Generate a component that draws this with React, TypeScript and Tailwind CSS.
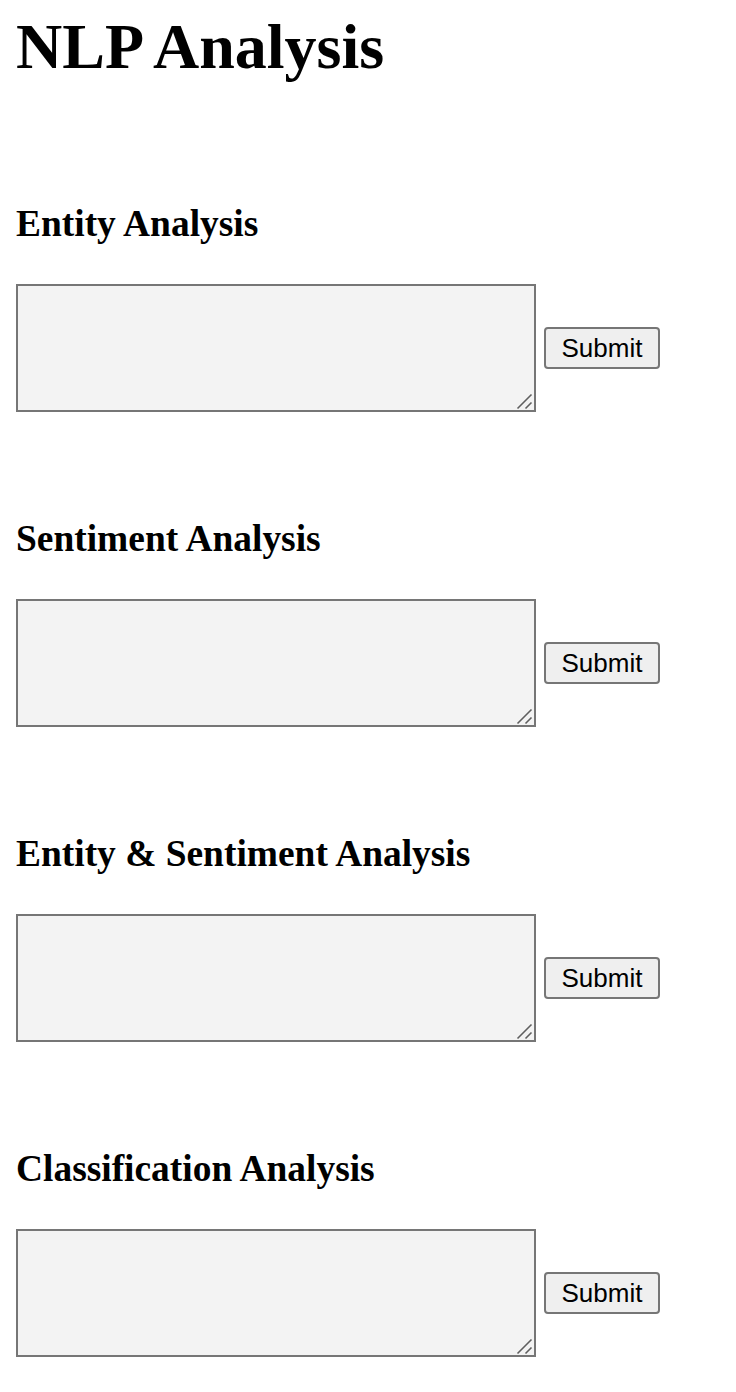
import React, { useState } from "react";

// Sections of the analysis form, in page order.
const sections = [
  { id: "entity", title: "Entity Analysis" },
  { id: "sentiment", title: "Sentiment Analysis" },
  { id: "entity-sentiment", title: "Entity & Sentiment Analysis" },
  { id: "classification", title: "Classification Analysis" },
];

function ResizeGrip() {
  return (
    <svg
      className="pointer-events-none absolute right-[2px] bottom-[2px]"
      width="18"
      height="18"
      viewBox="0 0 18 18"
    >
      <line x1="1.5" y1="16.5" x2="15.5" y2="2.5" stroke="#5f5f5f" strokeWidth="1.6" />
      <line x1="9.5" y1="16.5" x2="15.5" y2="10.5" stroke="#5f5f5f" strokeWidth="1.6" />
    </svg>
  );
}

function AnalysisSection({ title, first }: { title: string; first: boolean }) {
  const [text, setText] = useState("");

  return (
    <section className={first ? "mt-[118px]" : "mt-[105px]"}>
      <h3 className="text-[37.44px] leading-[43px] font-bold text-black">{title}</h3>
      <div className="mt-[39px] flex items-center gap-2">
        <div className="relative">
          <textarea
            value={text}
            onChange={(e) => setText(e.target.value)}
            className="block w-[520px] h-[128px] resize-none border-2 border-[#767676] bg-[#f3f3f3] outline-none"
          />
          <ResizeGrip />
        </div>
        <button
          type="button"
          className="w-[116px] h-[42px] rounded-[4px] border-2 border-[#767676] bg-[#efefef] text-[26px] leading-none text-black font-['Liberation_Sans',Arial,sans-serif]"
          onClick={() => console.log(title, text)}
        >
          Submit
        </button>
      </div>
    </section>
  );
}

export default function App() {
  return (
    <div className="min-h-screen bg-white px-4 pt-[10px] pb-10 font-['Liberation_Serif','Times_New_Roman',serif] text-black">
      <h1 className="text-[64px] leading-[74px] font-bold">NLP Analysis</h1>
      {sections.map((s, i) => (
        <AnalysisSection key={s.id} title={s.title} first={i === 0} />
      ))}
    </div>
  );
}
